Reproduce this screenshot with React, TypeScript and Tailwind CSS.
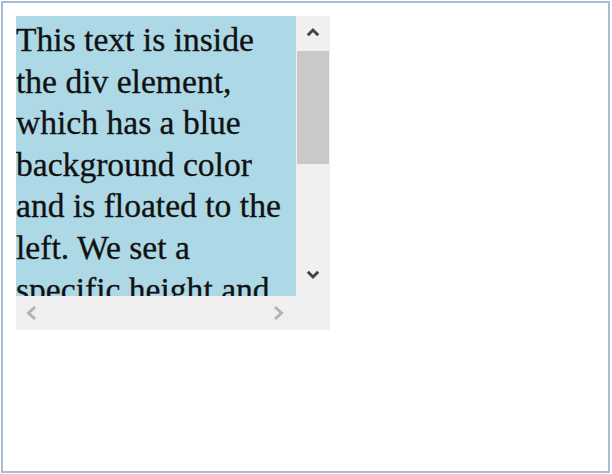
import React from "react";

export default function App() {
  return (
    <div className="w-[612px] h-[474px] bg-white p-px">
      <div className="w-[609px] h-[472px] border-2 border-[#a7bbd3] pt-[13px] pl-[13px]">
        <div className="grid w-[314px] grid-cols-[280px_34px] grid-rows-[280px_34px]">
          <div className="overflow-hidden bg-[#add8e6]">
            <p className="pt-[3px] font-['Liberation_Serif',serif] text-[33.6px] leading-[41.6px] text-[#111] [-webkit-text-stroke:0.3px_#111]">
              This text is inside the div element, which has a blue background color and is floated to the left. We set a
              specific height and width for the div, and the content overflows, so scrollbars appear.
            </p>
          </div>
          <div className="flex flex-col bg-[#f0f0f0]">
            <div className="flex h-[35px] justify-center pt-[11px]">
              <svg width="14" height="10" viewBox="0 0 14 10">
                <path d="M1.8 8.2 L7 3 L12.2 8.2" fill="none" stroke="#444" strokeWidth="3" />
              </svg>
            </div>
            <div className="mx-[1px] h-[113px] bg-[#c9c9c9]" />
            <div className="flex-1" />
            <div className="flex h-[42px] items-center justify-center">
              <svg width="14" height="10" viewBox="0 0 14 10">
                <path d="M1.8 1.8 L7 7 L12.2 1.8" fill="none" stroke="#444" strokeWidth="3" />
              </svg>
            </div>
          </div>
          <div className="flex items-center justify-between bg-[#f0f0f0] pl-[9px] pr-[11px]">
            <svg width="13" height="16" viewBox="0 0 13 16">
              <path d="M10 2 L3.5 8 L10 14" fill="none" stroke="#b3b3b3" strokeWidth="3" />
            </svg>
            <svg width="13" height="16" viewBox="0 0 13 16">
              <path d="M3 2 L9.5 8 L3 14" fill="none" stroke="#b3b3b3" strokeWidth="3" />
            </svg>
          </div>
          <div className="bg-[#f0f0f0]" />
        </div>
      </div>
    </div>
  );
}
